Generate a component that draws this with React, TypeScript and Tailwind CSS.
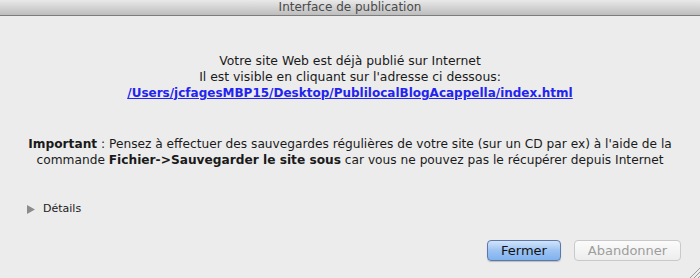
import React from 'react';

export default function App() {
  return (
    <div
      className="relative flex h-[278px] w-[700px] flex-col overflow-hidden bg-[#ececec] text-[12.4px] leading-[16px] text-[#1a1a1a]"
      style={{ fontFamily: '"DejaVu Sans", "Liberation Sans", sans-serif' }}
    >
      {/* Title bar */}
      <div className="flex h-[16px] items-center justify-center border-b border-[#7d7d7d] bg-gradient-to-b from-[#e9e9e9] to-[#bdbdbd] text-[12px] leading-[15px] text-[#4a4a4a]">
        Interface de publication
      </div>

      {/* Message */}
      <div className="mt-[37px] flex flex-col items-center text-center">
        <p>Votre site Web est déjà publié sur Internet</p>
        <p>Il est visible en cliquant sur l'adresse ci dessous:</p>
        <a className="text-[12px] font-bold text-[#2424f0] underline" href="#">
          /Users/jcfagesMBP15/Desktop/PublilocalBlogAcappella/index.html
        </a>
      </div>

      <div className="mt-[35px] px-[10px] text-center text-[12.2px]">
        <p>
          <b>Important</b> : Pensez à effectuer des sauvegardes régulières de votre site (sur un CD par ex) à l'aide de la
        </p>
        <p>
          commande <b>Fichier-&gt;Sauvegarder le site sous</b> car vous ne pouvez pas le récupérer depuis Internet
        </p>
      </div>

      {/* Details disclosure */}
      <div className="mt-[33px] flex items-center gap-[8px] pl-[27px]">
        <svg width="8" height="9" viewBox="0 0 8 9">
          <path d="M0 0 L8 4.5 L0 9 Z" fill="#8c8c8c" />
        </svg>
        <span className="text-[11px]">Détails</span>
      </div>

      {/* Buttons */}
      <div className="mt-[23px] flex justify-end gap-[13px] pr-[19px]">
        <button className="h-[21px] w-[74px] rounded-[4px] border border-[#5b78ad] bg-gradient-to-b from-[#d3e4fa] via-[#9cc3f3] to-[#7fb2ef] text-[13px] font-medium text-[#111] shadow-[0_1px_1px_rgba(0,0,0,0.2)]">
          Fermer
        </button>
        <button className="h-[21px] w-[107px] rounded-[4px] border border-[#c9c9c9] bg-gradient-to-b from-[#fbfbfb] to-[#ededed] text-[13px] font-medium text-[#9d9d9d]">
          Abandonner
        </button>
      </div>

      {/* Resize grip */}
      <svg className="absolute bottom-0 right-0" width="12" height="12" viewBox="0 0 12 12">
        <path d="M12 2 L2 12 M12 6 L6 12 M12 10 L10 12" stroke="#9a9a9a" strokeWidth="1" />
      </svg>
    </div>
  );
}
